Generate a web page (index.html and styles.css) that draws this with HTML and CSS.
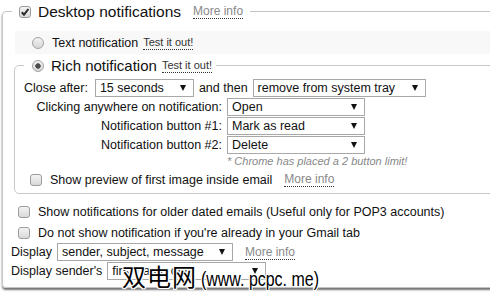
FILE: index.html
```html
<!DOCTYPE html>
<html lang="en">
<head>
    <meta charset="UTF-8">
    <title>Notification options</title>
    <link rel="stylesheet" href="styles.css">
</head>
<body>
    <div class="page">
        <fieldset class="section">
            <legend class="section-title">
                <span class="check"><svg width="10" height="10" viewBox="0 0 10 10"><path d="M1.8 5.2 L4 7.6 L8.4 2" fill="none" stroke="#2b2b2b" stroke-width="2"/></svg></span>
                <span class="title">Desktop notifications</span>
                <a class="more" href="#">More info</a>
            </legend>

            <div class="choice">
                <span class="radio"></span>
                <span class="choice-text">Text notification</span>
                <a class="test" href="#">Test it out!</a>
            </div>

            <fieldset class="rich">
                <legend class="rich-title">
                    <span class="radio selected"></span>
                    <span class="rich-text">Rich notification</span>
                    <a class="test" href="#">Test it out!</a>
                </legend>

                <div class="line">
                    <span>Close after:</span>
                    <span class="select close-select">15 seconds</span>
                    <span class="then">and then</span>
                    <span class="select tray-select">remove from system tray</span>
                </div>

                <div class="buttons">
                    <span class="label">Clicking anywhere on notification:</span>
                    <span class="select">Open</span>
                    <span class="label">Notification button #1:</span>
                    <span class="select">Mark as read</span>
                    <span class="label">Notification button #2:</span>
                    <span class="select">Delete</span>
                    <span class="hint">* Chrome has placed a 2 button limit!</span>
                </div>

                <div class="check-line inner">
                    <span class="check"></span>
                    <span>Show preview of first image inside email</span>
                    <a class="more" href="#">More info</a>
                </div>
            </fieldset>

            <div class="check-line first">
                <span class="check"></span>
                <span>Show notifications for older dated emails (Useful only for POP3 accounts)</span>
            </div>
            <div class="check-line">
                <span class="check"></span>
                <span>Do not show notification if you're already in your Gmail tab</span>
            </div>

            <div class="line">
                <span>Display</span>
                <span class="select display-select">sender, subject, message</span>
                <a class="more" href="#">More info</a>
            </div>
            <div class="line">
                <span>Display sender's</span>
                <span class="select sender-select">first name only</span>
            </div>
        </fieldset>

        <div class="watermark"><span class="mark-cjk">双电网</span><span class="mark-url">(www. pcpc. me)</span></div>
    </div>
</body>
</html>
```

FILE: styles.css
```css
html, body {
    margin: 0;
    background: #fff;
    overflow: hidden;
}
body {
    font-family: "Liberation Sans", Arial, sans-serif;
    font-size: 12.5px;
    color: #111;
}
a {
    text-decoration: none;
}
.page {
    position: relative;
    width: 490px;
    height: 300px;
}
.section {
    box-sizing: border-box;
    width: 530px;
    min-width: 0;
    margin: 3px 0 0 2px;
    padding: 11px 0 6px 8px;
    border: 1px solid #c4c4c4;
    border-radius: 4px;
    box-shadow: 0 2px 2px rgba(0, 0, 0, 0.55);
}
.section-title {
    display: flex;
    align-items: center;
    height: 17px;
    margin-left: 1px;
    padding: 0 7px;
}
.title {
    font-size: 15.5px;
    margin-left: 7px;
}
.more {
    font-size: 12px;
    line-height: 14px;
    color: #888;
    border-bottom: 1px dotted #333;
    margin-left: 12px;
}
.test {
    font-size: 11px;
    line-height: 13px;
    color: #333;
    border-bottom: 1px dotted #333;
    margin-left: 5px;
}
.check {
    box-sizing: border-box;
    display: inline-flex;
    align-items: center;
    justify-content: center;
    width: 12px;
    height: 12px;
    flex: none;
    border: 1px solid #9c9c9c;
    border-radius: 3px;
    background: linear-gradient(#f3f3f3, #d9d9d9);
}
.radio {
    box-sizing: border-box;
    display: inline-block;
    width: 12px;
    height: 12px;
    flex: none;
    border: 1px solid #a2a2a2;
    border-radius: 50%;
    background: linear-gradient(#f3f3f3, #d6d6d6);
}
.radio.selected {
    background: radial-gradient(circle, #4d4d4d 0 2.4px, transparent 3px), linear-gradient(#f3f3f3, #d6d6d6);
}
.choice {
    display: flex;
    align-items: center;
    height: 23px;
    margin-left: 4px;
    padding-left: 17px;
    background: #f8f8f8;
}
.choice-text {
    margin-left: 8px;
}
.rich {
    min-width: 0;
    margin: 3px 0 0 3px;
    padding: 5px 0 2px 9px;
    border: 1px solid #c8c8c8;
    border-radius: 5px;
}
.rich-title {
    display: flex;
    align-items: center;
    height: 17px;
    padding: 0 4px 0 8px;
}
.rich-text {
    font-size: 15px;
    margin-left: 7px;
}
.line {
    display: flex;
    align-items: center;
    height: 18px;
    margin-bottom: 1px;
}
.select {
    box-sizing: border-box;
    display: inline-flex;
    align-items: center;
    justify-content: space-between;
    height: 18px;
    padding: 0 7px 0 4px;
    border: 1px solid #a8a8a8;
    background: #fff;
    white-space: nowrap;
}
.select::after {
    content: "";
    border-left: 3px solid transparent;
    border-right: 3px solid transparent;
    border-top: 6px solid #111;
}
.close-select {
    width: 99px;
    margin-left: 7px;
}
.then {
    margin-left: 5px;
}
.tray-select {
    width: 173px;
    margin-left: 5px;
}
.display-select {
    width: 176px;
    margin-left: 5px;
}
.sender-select {
    width: 159px;
    margin-left: 5px;
}
.buttons {
    display: grid;
    grid-template-columns: 198px 138px;
    grid-template-rows: 19px 19px 19px 13px;
    column-gap: 5px;
}
.label {
    text-align: right;
    line-height: 18px;
}
.hint {
    grid-column: 2;
    font-size: 11px;
    font-style: italic;
    line-height: 13px;
    color: #888;
    white-space: nowrap;
}
.check-line {
    display: flex;
    align-items: center;
    height: 21px;
}
.check-line .check {
    margin: 0 8px 0 7px;
}
.check-line.inner {
    height: 23px;
}
.check-line.inner .check {
    margin-left: 6px;
}
.check-line.first {
    margin-top: 7px;
}
.watermark {
    position: absolute;
    left: 122px;
    top: 259px;
    display: flex;
    align-items: baseline;
    color: #000;
    white-space: nowrap;
    text-shadow: 1px 0 #fff, -1px 0 #fff, 0 1px #fff, 0 -1px #fff, 1px 1px #fff, -1px -1px #fff, 1px -1px #fff, -1px 1px #fff;
}
.mark-cjk {
    font-family: "Noto Sans CJK SC", sans-serif;
    font-size: 24px;
    line-height: 28px;
    letter-spacing: 1px;
}
.mark-url {
    font-family: "Liberation Sans", sans-serif;
    font-size: 21px;
    line-height: 28px;
    display: inline-block;
    transform: scaleX(0.76);
    transform-origin: left;
    margin-left: 4px;
}
```
